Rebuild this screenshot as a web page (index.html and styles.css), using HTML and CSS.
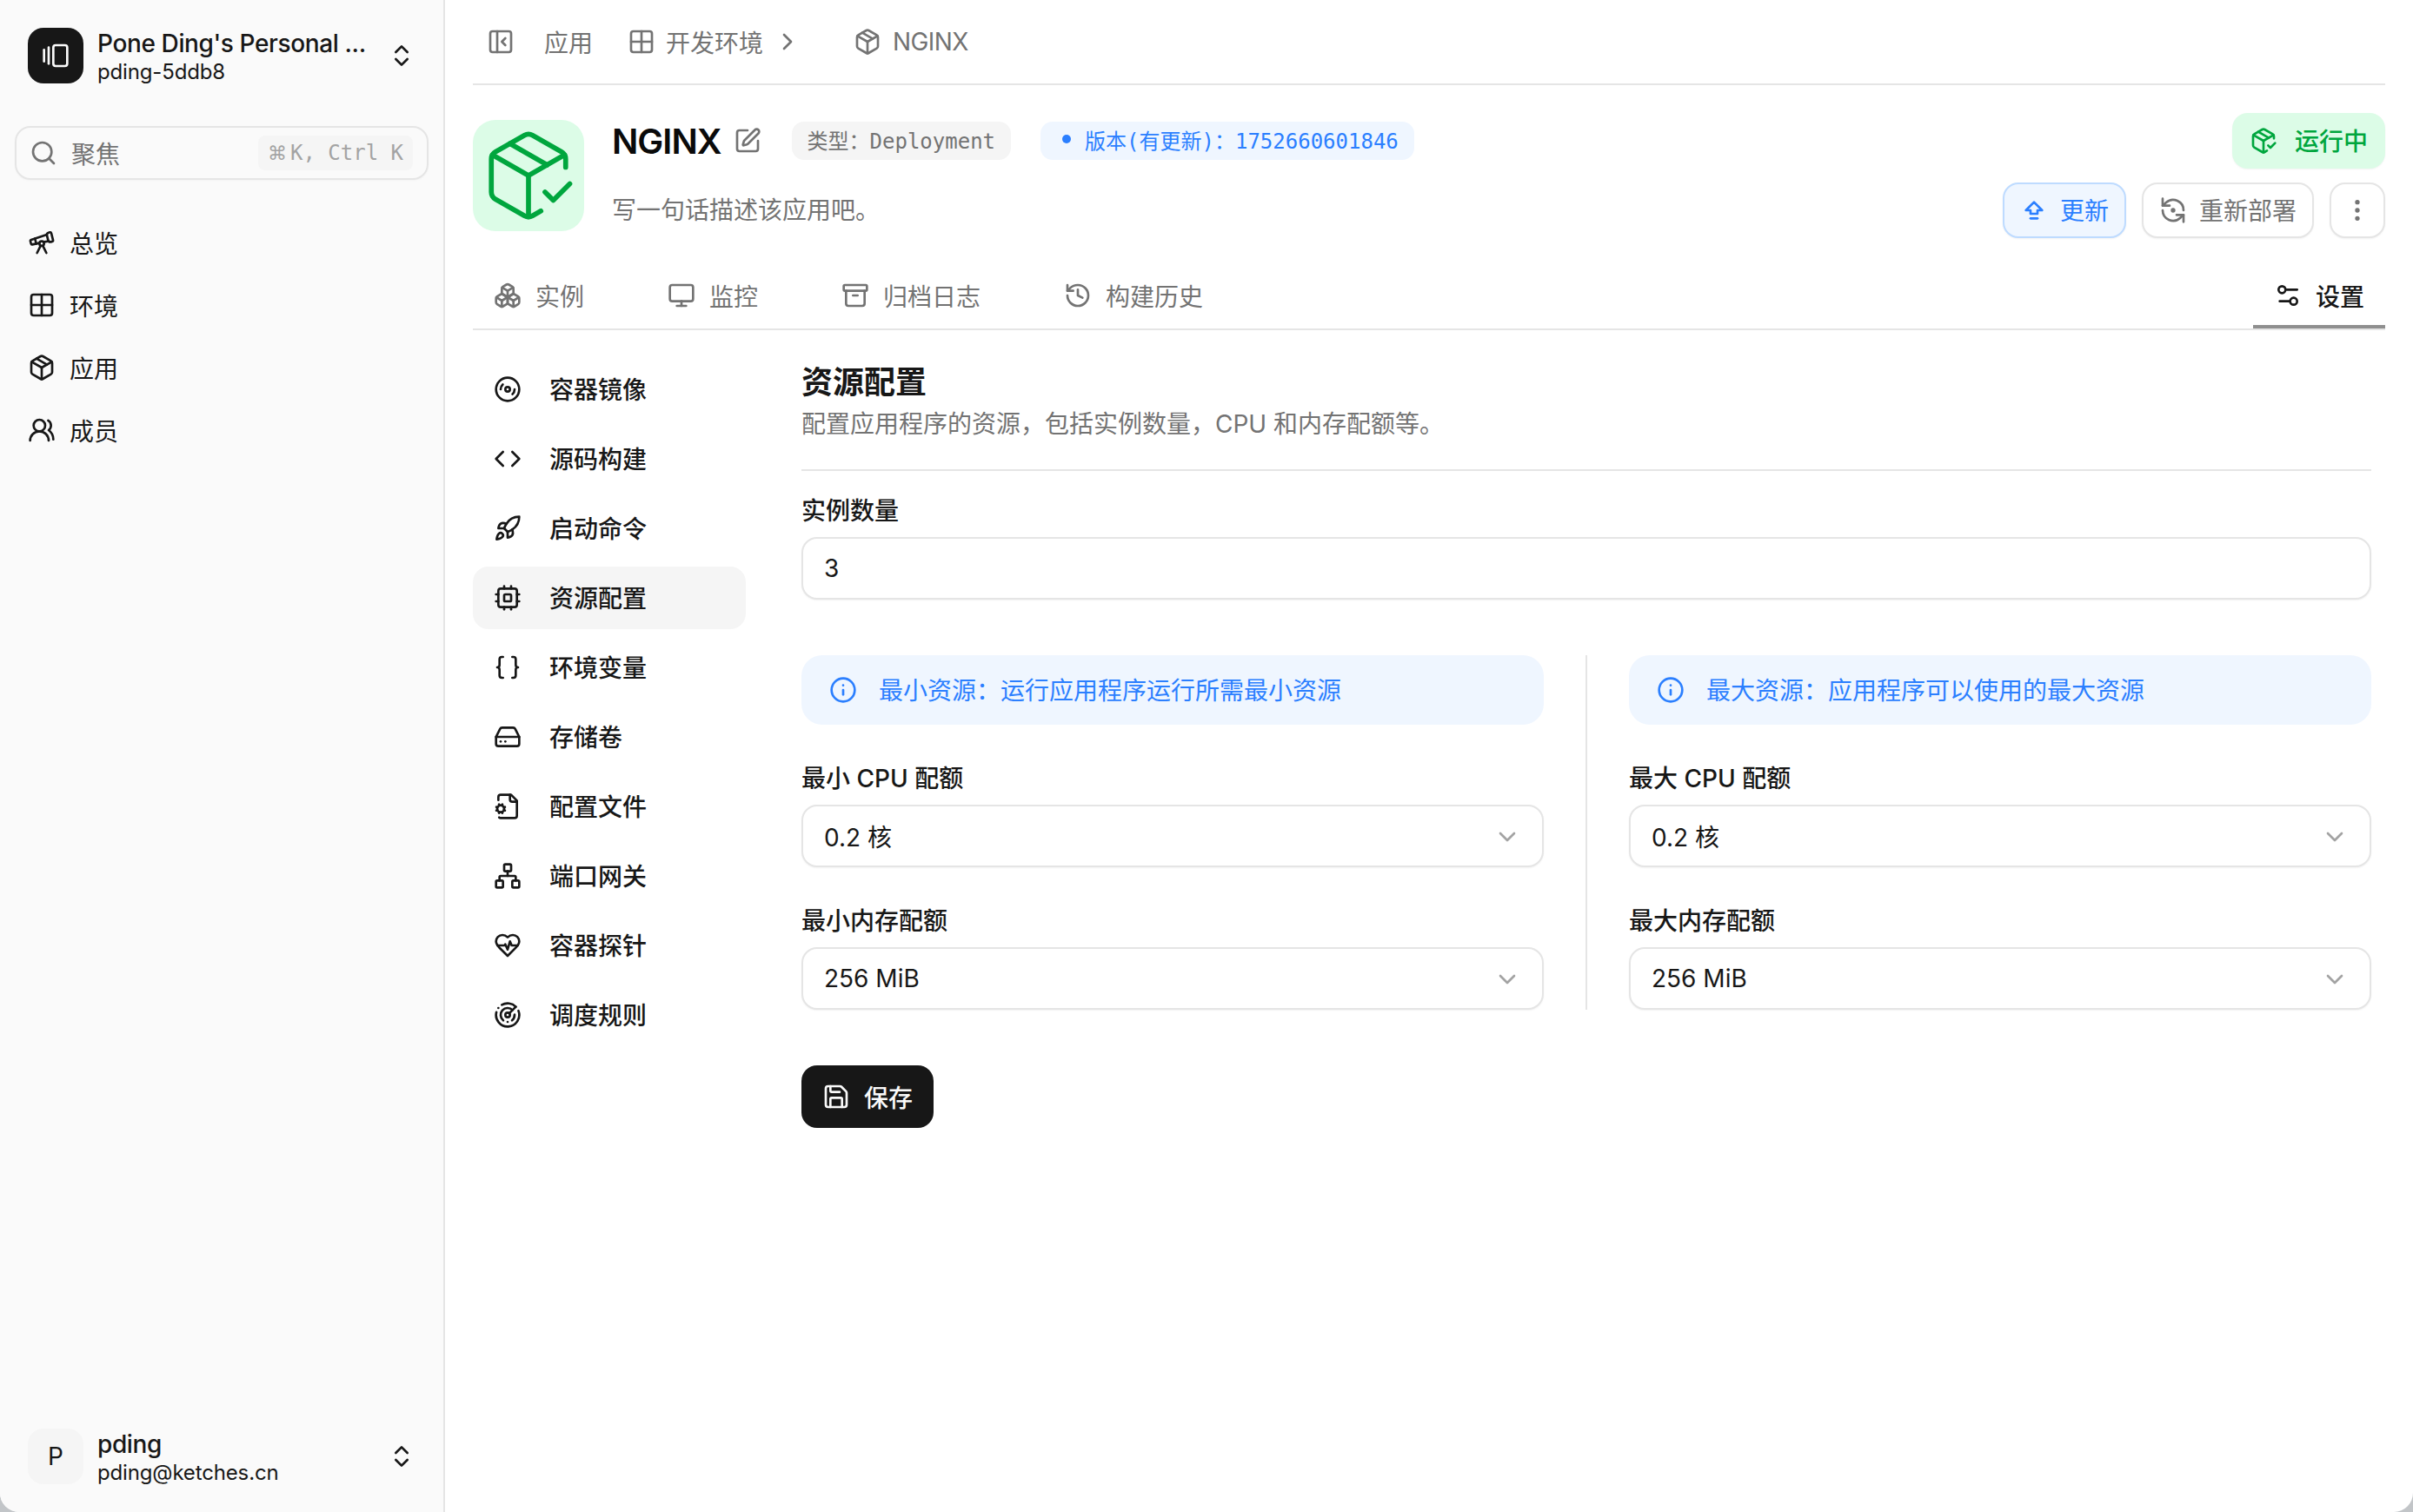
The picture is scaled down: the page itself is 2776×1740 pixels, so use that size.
FILE: index.html
```html
<!DOCTYPE html>
<html lang="zh-CN">
<head>
<meta charset="utf-8">
<title>NGINX</title>
<link rel="stylesheet" href="styles.css">
</head>
<body>
<svg class="sprite" aria-hidden="true">
  <symbol id="i-gallery" viewBox="0 0 24 24"><path d="M2 7v10"/><path d="M6 5v14"/><rect width="12" height="18" x="10" y="3" rx="2"/></symbol>
  <symbol id="i-updown" viewBox="0 0 24 24"><path d="m7 15 5 5 5-5"/><path d="m7 9 5-5 5 5"/></symbol>
  <symbol id="i-search" viewBox="0 0 24 24"><circle cx="11" cy="11" r="8"/><path d="m21 21-4.3-4.3"/></symbol>
  <symbol id="i-telescope" viewBox="0 0 24 24"><path d="m10.065 12.493-6.18 1.318a.934.934 0 0 1-1.108-.702l-.537-2.15a1.07 1.07 0 0 1 .691-1.265l13.504-4.44"/><path d="m13.56 11.747 4.332-.924"/><path d="m16 21-3.105-6.21"/><path d="M16.485 5.94a2 2 0 0 1 1.455-2.425l1.09-.272a1 1 0 0 1 1.212.727l1.515 6.06a1 1 0 0 1-.727 1.213l-1.09.272a2 2 0 0 1-2.425-1.455z"/><path d="m6.158 8.633 1.114 4.456"/><path d="m8 21 3.105-6.21"/><circle cx="12" cy="13" r="2"/></symbol>
  <symbol id="i-grid" viewBox="0 0 24 24"><rect width="18" height="18" x="3" y="3" rx="2"/><path d="M3 12h18"/><path d="M12 3v18"/></symbol>
  <symbol id="i-package" viewBox="0 0 24 24"><path d="M11 21.73a2 2 0 0 0 2 0l7-4A2 2 0 0 0 21 16V8a2 2 0 0 0-1-1.73l-7-4a2 2 0 0 0-2 0l-7 4A2 2 0 0 0 3 8v8a2 2 0 0 0 1 1.73z"/><path d="M12 22V12"/><polyline points="3.29 7 12 12 20.71 7"/><path d="m7.5 4.27 9 5.15"/></symbol>
  <symbol id="i-users" viewBox="0 0 24 24"><path d="M18 21a8 8 0 0 0-16 0"/><circle cx="10" cy="8" r="5"/><path d="M22 20c0-3.37-2-6.5-4-8a5 5 0 0 0-.45-8.3"/></symbol>
  <symbol id="i-panel" viewBox="0 0 24 24"><rect width="18" height="18" x="3" y="3" rx="2"/><path d="M9 3v18"/><path d="m16 15-3-3 3-3"/></symbol>
  <symbol id="i-right" viewBox="0 0 24 24"><path d="m9 18 6-6-6-6"/></symbol>
  <symbol id="i-down" viewBox="0 0 24 24"><path d="m6 9 6 6 6-6"/></symbol>
  <symbol id="i-check" viewBox="0 0 24 24"><path d="m16 16 2 2 4-4"/><path d="M21 10V8a2 2 0 0 0-1-1.73l-7-4a2 2 0 0 0-2 0l-7 4A2 2 0 0 0 3 8v8a2 2 0 0 0 1 1.73l7 4a2 2 0 0 0 2 0l2-1.14"/><path d="m7.5 4.27 9 5.15"/><polyline points="3.29 7 12 12 20.71 7"/><line x1="12" x2="12" y1="22" y2="12"/></symbol>
  <symbol id="i-pen" viewBox="0 0 24 24"><path d="M12 3H5a2 2 0 0 0-2 2v14a2 2 0 0 0 2 2h14a2 2 0 0 0 2-2v-7"/><path d="M18.375 2.625a1 1 0 0 1 3 3l-9.013 9.014a2 2 0 0 1-.853.505l-2.873.84a.5.5 0 0 1-.62-.62l.84-2.873a2 2 0 0 1 .506-.852z"/></symbol>
  <symbol id="i-upgrade" viewBox="0 0 24 24"><path d="M9 19h6"/><path d="M9 15v-3H5l7-7 7 7h-4v3H9z"/></symbol>
  <symbol id="i-redeploy" viewBox="0 0 24 24"><path d="M3 2v6h6"/><path d="M21 12A9 9 0 0 0 6 5.3L3 8"/><path d="M21 22v-6h-6"/><path d="M3 12a9 9 0 0 0 15 6.7l3-2.7"/><circle cx="12" cy="12" r="1"/></symbol>
  <symbol id="i-more" viewBox="0 0 24 24"><circle cx="12" cy="12" r="1"/><circle cx="12" cy="5" r="1"/><circle cx="12" cy="19" r="1"/></symbol>
  <symbol id="i-boxes" viewBox="0 0 24 24"><path d="M2.97 12.92A2 2 0 0 0 2 14.63v3.24a2 2 0 0 0 .97 1.71l3 1.8a2 2 0 0 0 2.06 0L12 19v-5.5l-5-3-4.03 2.42Z"/><path d="m7 16.5-4.74-2.85"/><path d="m7 16.5 5-3"/><path d="M7 16.5v5.17"/><path d="M12 13.5V19l3.97 2.38a2 2 0 0 0 2.06 0l3-1.8a2 2 0 0 0 .97-1.71v-3.24a2 2 0 0 0-.97-1.71L17 10.5l-5 3Z"/><path d="m17 16.5-5-3"/><path d="m17 16.5 4.74-2.85"/><path d="M17 16.5v5.17"/><path d="M7.97 4.42A2 2 0 0 0 7 6.13v4.37l5 3 5-3V6.13a2 2 0 0 0-.97-1.71l-3-1.8a2 2 0 0 0-2.06 0l-3 1.8Z"/><path d="M12 8 7.26 5.15"/><path d="m12 8 4.74-2.85"/><path d="M12 13.5V8"/></symbol>
  <symbol id="i-monitor" viewBox="0 0 24 24"><rect width="20" height="14" x="2" y="3" rx="2"/><line x1="8" x2="16" y1="21" y2="21"/><line x1="12" x2="12" y1="17" y2="21"/></symbol>
  <symbol id="i-archive" viewBox="0 0 24 24"><rect width="20" height="5" x="2" y="3" rx="1"/><path d="M4 8v11a2 2 0 0 0 2 2h12a2 2 0 0 0 2-2V8"/><path d="M10 12h4"/></symbol>
  <symbol id="i-history" viewBox="0 0 24 24"><path d="M3 12a9 9 0 1 0 9-9 9.75 9.75 0 0 0-6.74 2.74L3 8"/><path d="M3 3v5h5"/><path d="M12 7v5l4 2"/></symbol>
  <symbol id="i-settings" viewBox="0 0 24 24"><path d="M20 7h-9"/><path d="M14 17H5"/><circle cx="17" cy="17" r="3"/><circle cx="7" cy="7" r="3"/></symbol>
  <symbol id="i-disc" viewBox="0 0 24 24"><circle cx="12" cy="12" r="10"/><path d="M6 12c0-1.7.7-3.2 1.8-4.2"/><circle cx="12" cy="12" r="2"/><path d="M18 12c0 1.7-.7 3.2-1.8 4.2"/></symbol>
  <symbol id="i-code" viewBox="0 0 24 24"><polyline points="16 18 22 12 16 6"/><polyline points="8 6 2 12 8 18"/></symbol>
  <symbol id="i-rocket" viewBox="0 0 24 24"><path d="M4.5 16.5c-1.5 1.26-2 5-2 5s3.74-.5 5-2c.71-.84.7-2.13-.09-2.91a2.18 2.18 0 0 0-2.91-.09z"/><path d="m12 15-3-3a22 22 0 0 1 2-3.95A12.88 12.88 0 0 1 22 2c0 2.72-.78 7.5-6 11a22.35 22.35 0 0 1-4 2z"/><path d="M9 12H4s.55-3.03 2-4c1.62-1.08 5 0 5 0"/><path d="M12 15v5s3.03-.55 4-2c1.08-1.62 0-5 0-5"/></symbol>
  <symbol id="i-cpu" viewBox="0 0 24 24"><rect width="16" height="16" x="4" y="4" rx="2"/><rect width="6" height="6" x="9" y="9" rx="1"/><path d="M15 2v2"/><path d="M15 20v2"/><path d="M2 15h2"/><path d="M2 9h2"/><path d="M20 15h2"/><path d="M20 9h2"/><path d="M9 2v2"/><path d="M9 20v2"/></symbol>
  <symbol id="i-braces" viewBox="0 0 24 24"><path d="M8 3H7a2 2 0 0 0-2 2v5a2 2 0 0 1-2 2 2 2 0 0 1 2 2v5c0 1.1.9 2 2 2h1"/><path d="M16 21h1a2 2 0 0 0 2-2v-5c0-1.1.9-2 2-2a2 2 0 0 1-2-2V5a2 2 0 0 0-2-2h-1"/></symbol>
  <symbol id="i-drive" viewBox="0 0 24 24"><line x1="22" x2="2" y1="12" y2="12"/><path d="M5.45 5.11 2 12v6a2 2 0 0 0 2 2h16a2 2 0 0 0 2-2v-6l-3.45-6.89A2 2 0 0 0 16.76 4H7.24a2 2 0 0 0-1.79 1.11z"/><line x1="6" x2="6.01" y1="16" y2="16"/><line x1="10" x2="10.01" y1="16" y2="16"/></symbol>
  <symbol id="i-filecog" viewBox="0 0 24 24"><path d="M14 2v4a2 2 0 0 0 2 2h4"/><path d="M4.677 21.5a2 2 0 0 0 1.313.5H18a2 2 0 0 0 2-2V7l-5-5H6a2 2 0 0 0-2 2v2.5"/><path d="m3.2 12.9-.9-.4"/><path d="m3.2 15.1-.9.4"/><path d="m4.9 11.2-.4-.9"/><path d="m4.9 16.8-.4.9"/><path d="m7.5 10.3-.4.9"/><path d="m7.5 17.7-.4-.9"/><path d="m9.7 12.5-.9.4"/><path d="m9.7 15.5-.9-.4"/><circle cx="6" cy="14" r="3"/></symbol>
  <symbol id="i-network" viewBox="0 0 24 24"><rect x="16" y="16" width="6" height="6" rx="1"/><rect x="2" y="16" width="6" height="6" rx="1"/><rect x="9" y="2" width="6" height="6" rx="1"/><path d="M5 16v-3a1 1 0 0 1 1-1h12a1 1 0 0 1 1 1v3"/><path d="M12 12V8"/></symbol>
  <symbol id="i-heart" viewBox="0 0 24 24"><path d="M19 14c1.49-1.46 3-3.21 3-5.5A5.5 5.5 0 0 0 16.5 3c-1.76 0-3 .5-4.5 2-1.5-1.5-2.74-2-4.5-2A5.5 5.5 0 0 0 2 8.5c0 2.3 1.5 4.05 3 5.5l7 7Z"/><path d="M3.22 12H9.5l.5-1 2 4.5 2-7 1.5 3.5h5.27"/></symbol>
  <symbol id="i-radar" viewBox="0 0 24 24"><path d="M19.07 4.93A10 10 0 0 0 6.99 3.34"/><path d="M4 6h.01"/><path d="M2.29 9.62A10 10 0 1 0 21.31 8.35"/><path d="M16.24 7.76A6 6 0 1 0 8.23 16.67"/><path d="M12 18h.01"/><path d="M17.99 11.66A6 6 0 0 1 15.77 16.67"/><circle cx="12" cy="12" r="2"/><path d="m13.41 10.59 5.66-5.66"/></symbol>
  <symbol id="i-info" viewBox="0 0 24 24"><circle cx="12" cy="12" r="10"/><path d="M12 16v-4"/><path d="M12 8h.01"/></symbol>
  <symbol id="i-save" viewBox="0 0 24 24"><path d="M15.2 3a2 2 0 0 1 1.4.6l3.8 3.8a2 2 0 0 1 .6 1.4V19a2 2 0 0 1-2 2H5a2 2 0 0 1-2-2V5a2 2 0 0 1 2-2z"/><path d="M17 21v-7a1 1 0 0 0-1-1H8a1 1 0 0 0-1 1v7"/><path d="M7 3v4a1 1 0 0 0 1 1h7"/></symbol>
</svg>

<div class="window">
  <aside class="sidebar">
    <div class="account team">
      <div class="logo"><svg class="icon icon-logo"><use href="#i-gallery"/></svg></div>
      <div class="account-text">
        <div class="account-name">Pone Ding's Personal ...</div>
        <div class="account-sub">pding-5ddb8</div>
      </div>
      <svg class="icon icon-updown"><use href="#i-updown"/></svg>
    </div>
    <div class="search">
      <svg class="icon search-icon"><use href="#i-search"/></svg>
      <span class="search-text">聚焦</span>
      <kbd class="kbd"><span class="kbd-cmd">⌘</span>K, Ctrl K</kbd>
    </div>
    <nav class="nav">
      <a class="nav-item"><svg class="icon"><use href="#i-telescope"/></svg>总览</a>
      <a class="nav-item"><svg class="icon"><use href="#i-grid"/></svg>环境</a>
      <a class="nav-item"><svg class="icon"><use href="#i-package"/></svg>应用</a>
      <a class="nav-item"><svg class="icon"><use href="#i-users"/></svg>成员</a>
    </nav>
    <div class="account user">
      <div class="avatar">P</div>
      <div class="account-text">
        <div class="account-name">pding</div>
        <div class="account-sub">pding@ketches.cn</div>
      </div>
      <svg class="icon icon-updown"><use href="#i-updown"/></svg>
    </div>
  </aside>

  <main class="main">
    <header class="crumbs">
      <svg class="icon crumb-toggle"><use href="#i-panel"/></svg>
      <span class="crumb crumb-app">应用</span>
      <span class="crumb crumb-env"><svg class="icon"><use href="#i-grid"/></svg>开发环境</span>
      <svg class="icon crumb-sep"><use href="#i-right"/></svg>
      <span class="crumb crumb-name"><svg class="icon"><use href="#i-package"/></svg><span class="latin-tight">NGINX</span></span>
    </header>

    <section class="app-head">
      <div class="app-icon"><svg class="icon"><use href="#i-check"/></svg></div>
      <div class="app-info">
        <div class="app-title-row">
          <h1 class="app-title">NGINX</h1>
          <svg class="icon edit-icon"><use href="#i-pen"/></svg>
          <span class="badge badge-gray">类型：Deployment</span>
          <span class="badge badge-blue"><i class="dot"></i>版本(有更新)：1752660601846</span>
        </div>
        <p class="app-desc">写一句话描述该应用吧。</p>
      </div>
      <div class="app-actions">
        <div class="status lift"><svg class="icon"><use href="#i-check"/></svg>运行中</div>
        <div class="btn-row">
          <button class="btn btn-update lift"><svg class="icon"><use href="#i-upgrade"/></svg>更新</button>
          <button class="btn btn-redeploy lift"><svg class="icon"><use href="#i-redeploy"/></svg>重新部署</button>
          <button class="btn btn-more"><svg class="icon"><use href="#i-more"/></svg></button>
        </div>
      </div>
    </section>

    <div class="tabs">
      <a class="tab"><svg class="icon"><use href="#i-boxes"/></svg>实例</a>
      <a class="tab"><svg class="icon"><use href="#i-monitor"/></svg>监控</a>
      <a class="tab"><svg class="icon"><use href="#i-archive"/></svg>归档日志</a>
      <a class="tab"><svg class="icon"><use href="#i-history"/></svg>构建历史</a>
      <a class="tab tab-active"><svg class="icon"><use href="#i-settings"/></svg>设置</a>
    </div>

    <div class="settings">
      <nav class="subnav">
        <a class="subnav-item lift"><svg class="icon"><use href="#i-disc"/></svg>容器镜像</a>
        <a class="subnav-item lift"><svg class="icon"><use href="#i-code"/></svg>源码构建</a>
        <a class="subnav-item lift"><svg class="icon"><use href="#i-rocket"/></svg>启动命令</a>
        <a class="subnav-item lift subnav-active"><svg class="icon"><use href="#i-cpu"/></svg>资源配置</a>
        <a class="subnav-item lift"><svg class="icon"><use href="#i-braces"/></svg>环境变量</a>
        <a class="subnav-item lift"><svg class="icon"><use href="#i-drive"/></svg>存储卷</a>
        <a class="subnav-item lift"><svg class="icon"><use href="#i-filecog"/></svg>配置文件</a>
        <a class="subnav-item lift"><svg class="icon"><use href="#i-network"/></svg>端口网关</a>
        <a class="subnav-item lift"><svg class="icon"><use href="#i-heart"/></svg>容器探针</a>
        <a class="subnav-item lift"><svg class="icon"><use href="#i-radar"/></svg>调度规则</a>
      </nav>

      <div class="panel">
        <h2 class="panel-title">资源配置</h2>
        <p class="panel-desc">配置应用程序的资源，包括实例数量，CPU 和内存配额等。</p>
        <hr class="rule">
        <label class="label">实例数量</label>
        <div class="field">3</div>

        <div class="columns">
          <div class="col">
            <div class="alert lift"><svg class="icon"><use href="#i-info"/></svg>最小资源：运行应用程序运行所需最小资源</div>
            <label class="label">最小 CPU 配额</label>
            <div class="field select lift"><span>0.2 核</span><svg class="icon"><use href="#i-down"/></svg></div>
            <label class="label">最小内存配额</label>
            <div class="field select lift"><span>256 MiB</span><svg class="icon"><use href="#i-down"/></svg></div>
          </div>
          <div class="col-divider"></div>
          <div class="col">
            <div class="alert lift"><svg class="icon"><use href="#i-info"/></svg>最大资源：应用程序可以使用的最大资源</div>
            <label class="label">最大 CPU 配额</label>
            <div class="field select lift"><span>0.2 核</span><svg class="icon"><use href="#i-down"/></svg></div>
            <label class="label">最大内存配额</label>
            <div class="field select lift"><span>256 MiB</span><svg class="icon"><use href="#i-down"/></svg></div>
          </div>
        </div>

        <button class="btn-save"><svg class="icon"><use href="#i-save"/></svg>保存</button>
      </div>
    </div>
  </main>
</div>
</body>
</html>
```

FILE: styles.css
```css
* { box-sizing: border-box; }
html, body { margin: 0; padding: 0; }
body {
  width: 2776px;
  height: 1740px;
  overflow: hidden;
  background: #c2c5c8;
  font-family: "Inter", "Noto Sans CJK SC", sans-serif;
  font-size: 28px;
  color: #171717;
}
.sprite { display: none; }
.icon {
  width: 32px;
  height: 32px;
  flex: none;
  fill: none;
  stroke: currentColor;
  stroke-width: 2;
  stroke-linecap: round;
  stroke-linejoin: round;
}
/* raises the label 1px over its icon, to match the CJK baseline of the original */
.lift { padding-bottom: 2px; }
.lift > .icon { margin-top: 2px; }

.window {
  display: flex;
  width: 2776px;
  height: 1740px;
  background: #fff;
  border-radius: 0 0 22px 22px;
  overflow: hidden;
}

/* sidebar */
.sidebar {
  width: 512px;
  flex: none;
  display: flex;
  flex-direction: column;
  background: #fafafa;
  border-right: 2px solid #e5e5e5;
  padding: 32px 16px;
}
.account {
  display: flex;
  align-items: center;
  height: 64px;
  padding-left: 16px;
}
.logo {
  width: 64px;
  height: 64px;
  flex: none;
  display: flex;
  align-items: center;
  justify-content: center;
  background: #171717;
  color: #fafafa;
  border-radius: 18px;
}
.avatar {
  width: 64px;
  height: 64px;
  flex: none;
  display: flex;
  align-items: center;
  justify-content: center;
  background: #f5f5f5;
  border-radius: 18px;
  font-size: 28px;
}
.account-text {
  flex: 1;
  min-width: 0;
  margin-left: 16px;
  padding-top: 4px;
  white-space: nowrap;
}
.account-name { font-weight: 500; font-size: 28px; line-height: 34px; letter-spacing: -.38px; }
.account-sub { font-size: 24px; line-height: 32px; letter-spacing: -.15px; }
.icon-updown { margin-right: 16px; }

.search {
  display: flex;
  align-items: center;
  height: 62px;
  margin: 49px 1px 0;
  padding: 0 16px 0 15px;
  border: 2px solid #e5e5e5;
  border-radius: 18px;
  box-shadow: 0 1px 2px rgba(0,0,0,.03);
}
.search-icon { color: #737373; }
.search-text { flex: 1; margin-left: 16px; color: #737373; }
.kbd {
  display: flex;
  align-items: center;
  height: 40px;
  padding: 0 11px;
  background: #f5f5f5;
  border-radius: 8px;
  color: #a3a3a3;
  font-family: "DejaVu Sans Mono", "Liberation Mono", monospace;
  font-size: 24px;
}
.kbd-cmd { width: 26px; font-family: "DejaVu Sans", sans-serif; font-size: 22px; }

.nav {
  display: flex;
  flex-direction: column;
  flex: 1;
  margin-top: 36px;
}
.nav-item {
  display: flex;
  align-items: center;
  gap: 16px;
  height: 72px;
  padding-left: 16px;
}

/* main */
.main {
  flex: 1;
  min-width: 0;
  padding: 0 32px;
}
.crumbs {
  display: flex;
  align-items: center;
  height: 98px;
  border-bottom: 2px solid #e5e5e5;
  color: #737373;
  padding-left: 16px;
}
.crumb { display: flex; align-items: center; gap: 12px; }
.crumb-app { margin-left: 34px; }
.crumb-env { margin-left: 40px; }
.crumb-sep { margin-left: 12px; }
.crumb-name { margin-left: 60px; gap: 13px; }
.latin-tight { letter-spacing: -.6px; }

.app-head {
  display: flex;
  height: 204px;
  padding-top: 32px;
}
.app-icon {
  width: 128px;
  height: 128px;
  margin-top: 8px;
  flex: none;
  display: flex;
  align-items: center;
  justify-content: center;
  background: #dcfce7;
  border-radius: 26px;
  color: #00a63e;
}
.app-icon .icon { width: 114px; height: 114px; stroke-width: 1.2; }
.app-info { flex: 1; min-width: 0; padding-left: 32px; }
.app-title-row { display: flex; align-items: center; height: 44px; margin-top: 10px; }
.app-title { margin: 2px 0 0; font-size: 40px; font-weight: 600; letter-spacing: -1px; line-height: 44px; color: #0a0a0a; }
.edit-icon { margin-left: 14px; color: #737373; }
.badge {
  display: flex;
  align-items: center;
  height: 44px;
  padding: 0 18px 4px;
  border-radius: 14px;
  font-family: "DejaVu Sans Mono", "Noto Sans CJK SC", monospace;
  font-size: 24px;
  white-space: nowrap;
}
.badge-gray { margin-left: 35px; background: #f5f5f5; color: #737373; }
.badge-blue { margin-left: 34px; background: #eff6ff; color: #2b7fff; padding-left: 25px; }
.dot { width: 10px; height: 10px; border-radius: 50%; background: #2b7fff; margin-right: 16px; }
.app-desc { margin: 38px 0 0; color: #737373; line-height: 40px; }

.app-actions { display: flex; flex-direction: column; align-items: flex-end; }
.status {
  display: flex;
  align-items: center;
  gap: 20px;
  height: 64px;
  padding: 0 20px 2px;
  background: #dcfce7;
  border-radius: 18px;
  color: #00a63e;
  font-weight: 500;
  box-shadow: 0 1px 2px rgba(0,0,0,.05);
}
.btn-row { display: flex; gap: 18px; margin-top: 16px; }
.btn {
  display: flex;
  align-items: center;
  height: 64px;
  padding: 0 18px;
  background: #fff;
  border: 2px solid #e5e5e5;
  border-radius: 18px;
  font: inherit;
  color: #737373;
  gap: 14px;
  box-shadow: 0 1px 2px rgba(0,0,0,.05);
}
.btn.lift { padding-bottom: 2px; }
.btn-update { background: #eff6ff; border-color: #bedbff; color: #2b7fff; }
.btn-more { width: 64px; padding: 0; justify-content: center; }

.tabs {
  display: flex;
  gap: 48px;
  height: 78px;
  border-bottom: 2px solid #e5e5e5;
  color: #737373;
}
.tab {
  display: flex;
  align-items: center;
  gap: 16px;
  height: 76px;
  padding: 0 24px;
}
.tab-active {
  margin-left: auto;
  padding-top: 4px;
  color: #171717;
  font-weight: 500;
  border-bottom: 4px solid #8f8f8f;
}

.settings { display: flex; padding-top: 32px; }
.subnav { width: 314px; flex: none; display: flex; flex-direction: column; gap: 8px; }
.subnav-item {
  display: flex;
  align-items: center;
  gap: 32px;
  height: 72px;
  padding-left: 24px;
  border-radius: 18px;
  font-weight: 500;
}
.subnav-active { background: #f5f5f5; }

.panel { flex: 1; min-width: 0; margin-left: 64px; margin-right: 16px; }
.panel-title { margin: 0; font-size: 36px; font-weight: 600; line-height: 48px; padding-top: 4px; }
.panel-desc { margin: 0; color: #737373; line-height: 40px; padding-top: 4px; }
.rule { margin: 32px 0 0; border: 0; border-top: 2px solid #e5e5e5; }
.label { display: block; margin-top: 28px; line-height: 36px; font-weight: 500; }
.field {
  display: flex;
  align-items: center;
  height: 72px;
  margin-top: 12px;
  padding: 0 24px;
  border: 2px solid #e5e5e5;
  border-radius: 18px;
  background: #fff;
  box-shadow: 0 1px 2px rgba(0,0,0,.05);
}
.select { justify-content: space-between; }
.select .icon { color: #a3a3a3; }

.columns { display: flex; margin-top: 64px; }
.col { flex: 1; min-width: 0; }
.col .label { margin-top: 44px; }
.col-divider { width: 2px; flex: none; margin: 0 48px; background: #e5e5e5; }
.alert {
  display: flex;
  align-items: center;
  gap: 25px;
  height: 80px;
  padding-left: 32px;
  background: #eff6ff;
  border-radius: 24px;
  color: #2b7fff;
}
.btn-save {
  display: flex;
  align-items: center;
  gap: 16px;
  height: 72px;
  margin-top: 64px;
  padding: 0 24px;
  background: #171717;
  color: #fafafa;
  border: 0;
  border-radius: 18px;
  font: inherit;
  font-weight: 500;
}
```
